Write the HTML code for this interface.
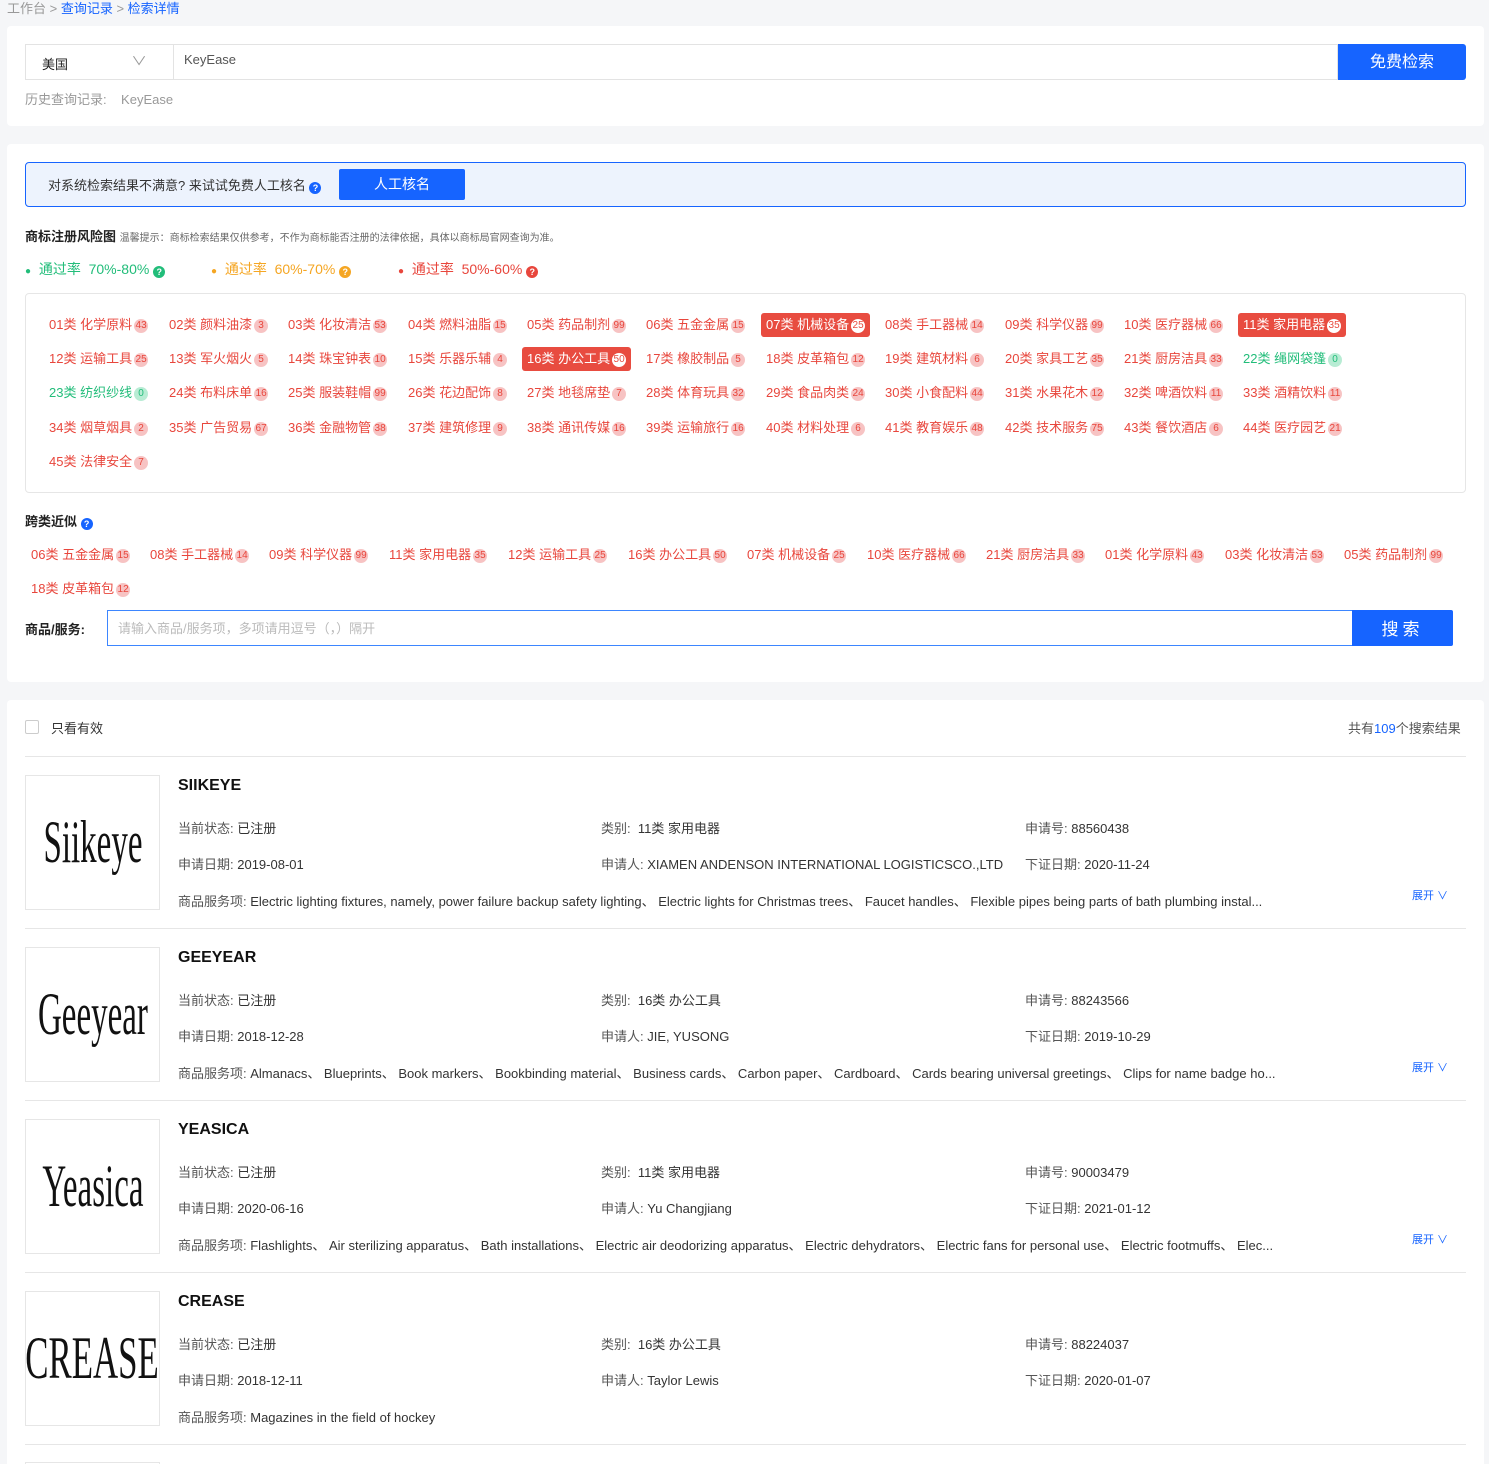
<!DOCTYPE html>
<html><head><meta charset="utf-8"><style>
*{margin:0;padding:0;box-sizing:border-box}
html{width:1489px;height:1464px;overflow:hidden}
body{width:1489px;height:1464px;background:#f5f6f8;font-family:"Liberation Sans","Noto Sans CJK SC",sans-serif;font-size:13px;color:#333;position:relative;overflow:hidden}
.a{position:absolute;white-space:nowrap}
.panel{position:absolute;left:7px;width:1477px;background:#fff;border-radius:4px}
.it{position:absolute;height:24px;line-height:24px;padding:0 5px;color:#e8463c;font-size:13px;white-space:nowrap;border-radius:3px}
.it b{display:inline-block;font-weight:normal;min-width:14px;height:14px;line-height:14px;border-radius:7px;background:#f7c3c3;color:#e8463c;font-size:10px;text-align:center;margin-left:2px;padding:0 1px;vertical-align:1px}
.it.h{background:#e84c40;color:#fff}
.it.h b{background:#fff;color:#e84c40}
.it.g{color:#22bd7a}
.it.g b{background:#b8ecd4;color:#22bd7a}
.q{display:inline-block;width:12px;height:12px;border-radius:6px;color:#fff;font-size:9px;line-height:12px;text-align:center;font-weight:bold;vertical-align:-1px}
.img{position:absolute;left:25px;width:135px;height:135px;border:1px solid #e6e6e6;background:#fff;display:flex;align-items:center;justify-content:center;font-family:"Liberation Serif",serif;color:#111;overflow:hidden}
.img span{display:inline-block;transform:scaleX(.55)}
.sep{position:absolute;left:25px;width:1441px;height:1px;background:#e6e6e6}
.t{position:absolute;font-size:16px;font-weight:bold;color:#111;left:178px}
.f{position:absolute;font-size:13px;color:#333;white-space:nowrap}
.f span{color:#555}
.ex{position:absolute;left:1412px;font-size:11px;color:#1664ff}
</style></head><body>
<div class="a" style="left:7px;top:-2px;font-size:13px;color:#999">工作台 &gt; <span style="color:#1664ff">查询记录</span> &gt; <span style="color:#1664ff">检索详情</span></div>

<div class="panel" style="top:26px;height:100px"></div>
<div class="a" style="left:25px;top:44px;width:1313px;height:36px;border:1px solid #e3e3e3;background:#fff"></div>
<div class="a" style="left:173px;top:44px;width:1px;height:36px;background:#e3e3e3"></div>
<div class="a" style="left:42px;top:54px;font-size:13px;color:#222">美国</div>
<div class="a" style="left:133px;top:52px;font-size:12px;color:#999;transform:scaleX(1.3)">∨</div>
<div class="a" style="left:184px;top:52px;color:#555">KeyEase</div>
<div class="a" style="left:1338px;top:44px;width:128px;height:36px;background:#1664ff;color:#fff;font-size:16px;line-height:38px;text-align:center;border-radius:0 3px 3px 0">免费检索</div>
<div class="a" style="left:25px;top:89px;color:#999">历史查询记录:&nbsp;&nbsp;&nbsp;&nbsp;KeyEase</div>

<div class="panel" style="top:144px;height:538px"></div>
<div class="a" style="left:25px;top:162px;width:1441px;height:45px;border:1px solid #1664ff;background:#edf3fd;border-radius:4px"></div>
<div class="a" style="left:48px;top:175px;color:#333">对系统检索结果不满意? 来试试免费人工核名 <span class="q" style="background:#1664ff">?</span></div>
<div class="a" style="left:339px;top:169px;width:126px;height:31px;background:#1664ff;color:#fff;font-size:14px;line-height:31px;text-align:center;border-radius:2px">人工核名</div>
<div class="a" style="left:25px;top:226px;font-size:13px;font-weight:bold;color:#222">商标注册风险图 <span style="font-weight:normal;font-size:10px;color:#666">温馨提示：商标检索结果仅供参考，不作为商标能否注册的法律依据，具体以商标局官网查询为准。</span></div>
<div class="a" style="left:25px;top:259px;font-size:14px;color:#22bd7a"><span style="font-size:10px">●</span>&nbsp; 通过率&nbsp; 70%-80% <span class="q" style="background:#22bd7a">?</span></div>
<div class="a" style="left:211px;top:259px;font-size:14px;color:#f5a623"><span style="font-size:10px">●</span>&nbsp; 通过率&nbsp; 60%-70% <span class="q" style="background:#f5a623">?</span></div>
<div class="a" style="left:398px;top:259px;font-size:14px;color:#e8463c"><span style="font-size:10px">●</span>&nbsp; 通过率&nbsp; 50%-60% <span class="q" style="background:#e8463c">?</span></div>

<div class="a" style="left:25px;top:293px;width:1441px;height:200px;border:1px solid #e6e6e6;border-radius:4px"></div>
<div class="it" style="left:44px;top:313px">01类 化学原料<b>43</b></div>
<div class="it" style="left:164px;top:313px">02类 颜料油漆<b>3</b></div>
<div class="it" style="left:283px;top:313px">03类 化妆清洁<b>53</b></div>
<div class="it" style="left:403px;top:313px">04类 燃料油脂<b>15</b></div>
<div class="it" style="left:522px;top:313px">05类 药品制剂<b>99</b></div>
<div class="it" style="left:641px;top:313px">06类 五金金属<b>15</b></div>
<div class="it h" style="left:761px;top:313px">07类 机械设备<b>25</b></div>
<div class="it" style="left:880px;top:313px">08类 手工器械<b>14</b></div>
<div class="it" style="left:1000px;top:313px">09类 科学仪器<b>99</b></div>
<div class="it" style="left:1119px;top:313px">10类 医疗器械<b>66</b></div>
<div class="it h" style="left:1238px;top:313px">11类 家用电器<b>35</b></div>
<div class="it" style="left:44px;top:347px">12类 运输工具<b>25</b></div>
<div class="it" style="left:164px;top:347px">13类 军火烟火<b>5</b></div>
<div class="it" style="left:283px;top:347px">14类 珠宝钟表<b>10</b></div>
<div class="it" style="left:403px;top:347px">15类 乐器乐辅<b>4</b></div>
<div class="it h" style="left:522px;top:347px">16类 办公工具<b>50</b></div>
<div class="it" style="left:641px;top:347px">17类 橡胶制品<b>5</b></div>
<div class="it" style="left:761px;top:347px">18类 皮革箱包<b>12</b></div>
<div class="it" style="left:880px;top:347px">19类 建筑材料<b>6</b></div>
<div class="it" style="left:1000px;top:347px">20类 家具工艺<b>35</b></div>
<div class="it" style="left:1119px;top:347px">21类 厨房洁具<b>33</b></div>
<div class="it g" style="left:1238px;top:347px">22类 绳网袋篷<b>0</b></div>
<div class="it g" style="left:44px;top:381px">23类 纺织纱线<b>0</b></div>
<div class="it" style="left:164px;top:381px">24类 布料床单<b>16</b></div>
<div class="it" style="left:283px;top:381px">25类 服装鞋帽<b>99</b></div>
<div class="it" style="left:403px;top:381px">26类 花边配饰<b>8</b></div>
<div class="it" style="left:522px;top:381px">27类 地毯席垫<b>7</b></div>
<div class="it" style="left:641px;top:381px">28类 体育玩具<b>32</b></div>
<div class="it" style="left:761px;top:381px">29类 食品肉类<b>24</b></div>
<div class="it" style="left:880px;top:381px">30类 小食配料<b>44</b></div>
<div class="it" style="left:1000px;top:381px">31类 水果花木<b>12</b></div>
<div class="it" style="left:1119px;top:381px">32类 啤酒饮料<b>11</b></div>
<div class="it" style="left:1238px;top:381px">33类 酒精饮料<b>11</b></div>
<div class="it" style="left:44px;top:416px">34类 烟草烟具<b>2</b></div>
<div class="it" style="left:164px;top:416px">35类 广告贸易<b>67</b></div>
<div class="it" style="left:283px;top:416px">36类 金融物管<b>38</b></div>
<div class="it" style="left:403px;top:416px">37类 建筑修理<b>9</b></div>
<div class="it" style="left:522px;top:416px">38类 通讯传媒<b>16</b></div>
<div class="it" style="left:641px;top:416px">39类 运输旅行<b>16</b></div>
<div class="it" style="left:761px;top:416px">40类 材料处理<b>6</b></div>
<div class="it" style="left:880px;top:416px">41类 教育娱乐<b>48</b></div>
<div class="it" style="left:1000px;top:416px">42类 技术服务<b>75</b></div>
<div class="it" style="left:1119px;top:416px">43类 餐饮酒店<b>6</b></div>
<div class="it" style="left:1238px;top:416px">44类 医疗园艺<b>21</b></div>
<div class="it" style="left:44px;top:450px">45类 法律安全<b>7</b></div>

<div class="a" style="left:25px;top:511px;font-weight:bold;color:#222">跨类近似 <span class="q" style="background:#1664ff">?</span></div>
<div class="it" style="left:26px;top:543px">06类 五金金属<b>15</b></div>
<div class="it" style="left:145px;top:543px">08类 手工器械<b>14</b></div>
<div class="it" style="left:264px;top:543px">09类 科学仪器<b>99</b></div>
<div class="it" style="left:384px;top:543px">11类 家用电器<b>35</b></div>
<div class="it" style="left:503px;top:543px">12类 运输工具<b>25</b></div>
<div class="it" style="left:623px;top:543px">16类 办公工具<b>50</b></div>
<div class="it" style="left:742px;top:543px">07类 机械设备<b>25</b></div>
<div class="it" style="left:862px;top:543px">10类 医疗器械<b>66</b></div>
<div class="it" style="left:981px;top:543px">21类 厨房洁具<b>33</b></div>
<div class="it" style="left:1100px;top:543px">01类 化学原料<b>43</b></div>
<div class="it" style="left:1220px;top:543px">03类 化妆清洁<b>53</b></div>
<div class="it" style="left:1339px;top:543px">05类 药品制剂<b>99</b></div>
<div class="it" style="left:26px;top:577px">18类 皮革箱包<b>12</b></div>

<div class="a" style="left:25px;top:619px;font-weight:bold;color:#222">商品/服务:</div>
<div class="a" style="left:107px;top:610px;width:1246px;height:36px;border:1px solid #3d86ff;border-right:none"></div>
<div class="a" style="left:118px;top:618px;color:#bbb">请输入商品/服务项，多项请用逗号（，）隔开</div>
<div class="a" style="left:1352px;top:610px;width:101px;height:36px;background:#1664ff;color:#fff;font-size:17px;line-height:39px;text-align:center;letter-spacing:4px;border-radius:0 2px 2px 0">搜索</div>

<div class="panel" style="top:700px;height:764px;border-radius:4px 4px 0 0"></div>
<div class="a" style="left:25px;top:720px;width:14px;height:14px;border:1px solid #ccc;border-radius:2px"></div>
<div class="a" style="left:51px;top:718px;color:#333">只看有效</div>
<div class="a" style="left:1348px;top:718px;color:#555">共有<span style="color:#1664ff">109</span>个搜索结果</div>
<div class="sep" style="top:756px"></div>

<div class="img" style="top:775px;font-size:60px"><span>Siikeye</span></div>
<div class="t" style="top:777px">SIIKEYE</div>
<div class="f" style="left:178px;top:818px"><span>当前状态:</span> 已注册</div>
<div class="f" style="left:601px;top:818px"><span>类别:</span>&nbsp; 11类 家用电器</div>
<div class="f" style="left:1025px;top:818px"><span>申请号:</span> 88560438</div>
<div class="f" style="left:178px;top:854px"><span>申请日期:</span> 2019-08-01</div>
<div class="f" style="left:601px;top:854px"><span>申请人:</span> XIAMEN ANDENSON INTERNATIONAL LOGISTICSCO.,LTD</div>
<div class="f" style="left:1025px;top:854px"><span>下证日期:</span> 2020-11-24</div>
<div class="f" style="left:178px;top:891px"><span>商品服务项:</span> Electric lighting fixtures, namely, power failure backup safety lighting、 Electric lights for Christmas trees、 Faucet handles、 Flexible pipes being parts of bath plumbing instal...</div>
<div class="ex" style="top:887px">展开 ∨</div>
<div class="sep" style="top:928px"></div>

<div class="img" style="top:947px;font-size:60px"><span>Geeyear</span></div>
<div class="t" style="top:949px">GEEYEAR</div>
<div class="f" style="left:178px;top:990px"><span>当前状态:</span> 已注册</div>
<div class="f" style="left:601px;top:990px"><span>类别:</span>&nbsp; 16类 办公工具</div>
<div class="f" style="left:1025px;top:990px"><span>申请号:</span> 88243566</div>
<div class="f" style="left:178px;top:1026px"><span>申请日期:</span> 2018-12-28</div>
<div class="f" style="left:601px;top:1026px"><span>申请人:</span> JIE, YUSONG</div>
<div class="f" style="left:1025px;top:1026px"><span>下证日期:</span> 2019-10-29</div>
<div class="f" style="left:178px;top:1063px"><span>商品服务项:</span> Almanacs、 Blueprints、 Book markers、 Bookbinding material、 Business cards、 Carbon paper、 Cardboard、 Cards bearing universal greetings、 Clips for name badge ho...</div>
<div class="ex" style="top:1059px">展开 ∨</div>
<div class="sep" style="top:1100px"></div>

<div class="img" style="top:1119px;font-size:60px"><span>Yeasica</span></div>
<div class="t" style="top:1121px">YEASICA</div>
<div class="f" style="left:178px;top:1162px"><span>当前状态:</span> 已注册</div>
<div class="f" style="left:601px;top:1162px"><span>类别:</span>&nbsp; 11类 家用电器</div>
<div class="f" style="left:1025px;top:1162px"><span>申请号:</span> 90003479</div>
<div class="f" style="left:178px;top:1198px"><span>申请日期:</span> 2020-06-16</div>
<div class="f" style="left:601px;top:1198px"><span>申请人:</span> Yu Changjiang</div>
<div class="f" style="left:1025px;top:1198px"><span>下证日期:</span> 2021-01-12</div>
<div class="f" style="left:178px;top:1235px"><span>商品服务项:</span> Flashlights、 Air sterilizing apparatus、 Bath installations、 Electric air deodorizing apparatus、 Electric dehydrators、 Electric fans for personal use、 Electric footmuffs、 Elec...</div>
<div class="ex" style="top:1231px">展开 ∨</div>
<div class="sep" style="top:1272px"></div>

<div class="img" style="top:1291px;font-size:60px"><span style="transform:scaleX(.58)">CREASE</span></div>
<div class="t" style="top:1293px">CREASE</div>
<div class="f" style="left:178px;top:1334px"><span>当前状态:</span> 已注册</div>
<div class="f" style="left:601px;top:1334px"><span>类别:</span>&nbsp; 16类 办公工具</div>
<div class="f" style="left:1025px;top:1334px"><span>申请号:</span> 88224037</div>
<div class="f" style="left:178px;top:1370px"><span>申请日期:</span> 2018-12-11</div>
<div class="f" style="left:601px;top:1370px"><span>申请人:</span> Taylor Lewis</div>
<div class="f" style="left:1025px;top:1370px"><span>下证日期:</span> 2020-01-07</div>
<div class="f" style="left:178px;top:1407px"><span>商品服务项:</span> Magazines in the field of hockey</div>
<div class="sep" style="top:1444px"></div>
<div class="a" style="left:25px;top:1462px;width:135px;height:2px;border:1px solid #e6e6e6;border-bottom:none"></div>
</body></html>
